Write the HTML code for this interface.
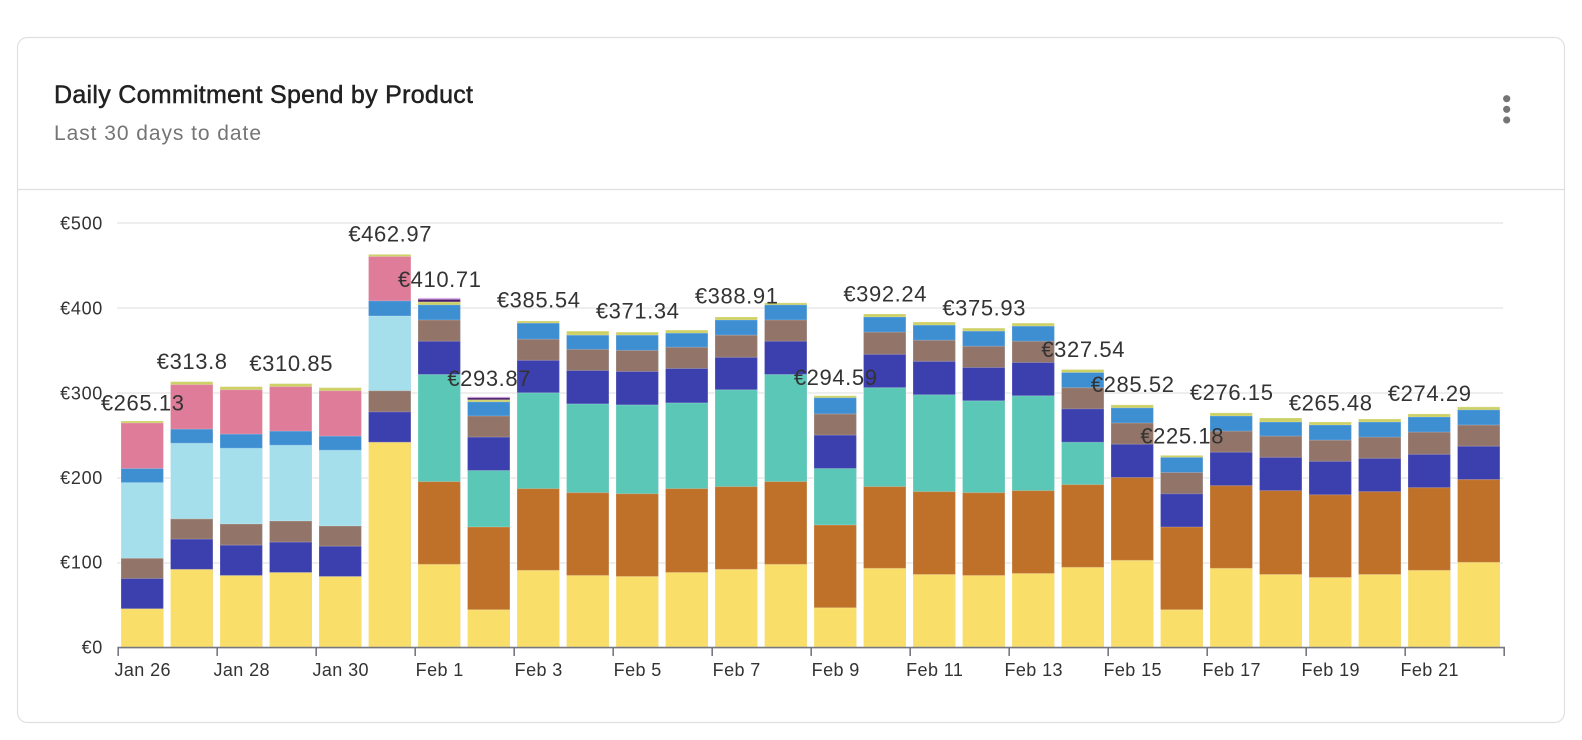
<!DOCTYPE html>
<html>
<head>
<meta charset="utf-8">
<title>Daily Commitment Spend by Product</title>
<style>
html,body{margin:0;padding:0;background:#fff;width:1582px;height:740px;overflow:hidden}
svg{display:block}
text{font-family:"Liberation Sans",sans-serif}
.l{font-size:22px;fill:#333;text-anchor:middle;letter-spacing:.6px}
.y{font-size:18px;fill:#333;text-anchor:end;letter-spacing:.7px}
.x{font-size:18px;fill:#333;text-anchor:middle;letter-spacing:.4px}
.s path{stroke:#fff;stroke-opacity:.22;stroke-width:1}
</style>
</head>
<body>
<svg width="1582" height="740" viewBox="0 0 1582 740" xmlns="http://www.w3.org/2000/svg">
<rect x="17.5" y="37.5" width="1547" height="685" rx="10" fill="#fff" stroke="#e0e0e0" stroke-width="1.2"/>
<line x1="18" x2="1564" y1="189.5" y2="189.5" stroke="#e0e0e0" stroke-width="1.2"/>
<text x="54" y="103" font-size="25" fill="#212121" stroke="#212121" stroke-width=".5" textLength="419" lengthAdjust="spacing">Daily Commitment Spend by Product</text>
<text x="54" y="140" font-size="21" fill="#757575" textLength="207" lengthAdjust="spacing">Last 30 days to date</text>
<circle cx="1506.7" cy="98.7" r="3.6" fill="#757575"/>
<circle cx="1506.7" cy="109.3" r="3.6" fill="#757575"/>
<circle cx="1506.7" cy="120" r="3.6" fill="#757575"/>

<g stroke="#e8e8e8" stroke-width="1.6">
<line x1="117" x2="1503" y1="223" y2="223"/>
<line x1="117" x2="1503" y1="308" y2="308"/>
<line x1="117" x2="1503" y1="393" y2="393"/>
<line x1="117" x2="1503" y1="478" y2="478"/>
<line x1="117" x2="1503" y1="563" y2="563"/>
</g>

<g class="s" transform="scale(1,1.0096)">
<path fill="#D8A8E8" d="M418 295V641h42.4V295zM467.5 393V641h42.4V393z"/>
<path fill="#4A1A6B" d="M418 296.5V641h42.4V296.5zM467.5 394V641h42.4V394z"/>
<path fill="#CDD165" d="M121 417V641h42.4V417zM170.5 378V641h42.4V378zM220 383V641h42.4V383zM269.5 380V641h42.4V380zM319 384V641h42.4V384zM368.5 252V641h42.4V252zM418 299V641h42.4V299zM467.5 396V641h42.4V396zM517 318V641h42.4V318zM566.5 328V641h42.4V328zM616 329V641h42.4V329zM665.5 327V641h42.4V327zM715 314V641h42.4V314zM764.5 300V641h42.4V300zM814 392V641h42.4V392zM863.5 311V641h42.4V311zM913 319V641h42.4V319zM962.5 325V641h42.4V325zM1012 320V641h42.4V320zM1061.5 366V641h42.4V366zM1111 401V641h42.4V401zM1160.5 451V641h42.4V451zM1210 409V641h42.4V409zM1259.5 414V641h42.4V414zM1309 418V641h42.4V418zM1358.5 415V641h42.4V415zM1408 410V641h42.4V410zM1457.5 403V641h42.4V403z"/>
<path fill="#DE7C99" d="M121 419V641h42.4V419zM170.5 381V641h42.4V381zM220 386V641h42.4V386zM269.5 383V641h42.4V383zM319 387V641h42.4V387zM368.5 254V641h42.4V254z"/>
<path fill="#3E8ED2" d="M121 464V641h42.4V464zM170.5 425V641h42.4V425zM220 430V641h42.4V430zM269.5 427V641h42.4V427zM319 432V641h42.4V432zM368.5 298V641h42.4V298zM418 302V641h42.4V302zM467.5 398V641h42.4V398zM517 320V641h42.4V320zM566.5 332V641h42.4V332zM616 332V641h42.4V332zM665.5 330V641h42.4V330zM715 317V641h42.4V317zM764.5 302V641h42.4V302zM814 394V641h42.4V394zM863.5 314V641h42.4V314zM913 322V641h42.4V322zM962.5 328V641h42.4V328zM1012 323V641h42.4V323zM1061.5 369V641h42.4V369zM1111 404V641h42.4V404zM1160.5 453V641h42.4V453zM1210 412V641h42.4V412zM1259.5 418V641h42.4V418zM1309 421V641h42.4V421zM1358.5 418V641h42.4V418zM1408 413V641h42.4V413zM1457.5 406V641h42.4V406z"/>
<path fill="#A5DFEB" d="M121 478V641h42.4V478zM170.5 439V641h42.4V439zM220 444V641h42.4V444zM269.5 441V641h42.4V441zM319 446V641h42.4V446zM368.5 313V641h42.4V313z"/>
<path fill="#937468" d="M121 553V641h42.4V553zM170.5 514V641h42.4V514zM220 519V641h42.4V519zM269.5 516V641h42.4V516zM319 521V641h42.4V521zM368.5 387V641h42.4V387zM418 317V641h42.4V317zM467.5 412V641h42.4V412zM517 336V641h42.4V336zM566.5 346V641h42.4V346zM616 347V641h42.4V347zM665.5 344V641h42.4V344zM715 332V641h42.4V332zM764.5 317V641h42.4V317zM814 410V641h42.4V410zM863.5 329V641h42.4V329zM913 337V641h42.4V337zM962.5 343V641h42.4V343zM1012 338V641h42.4V338zM1061.5 384V641h42.4V384zM1111 419V641h42.4V419zM1160.5 468V641h42.4V468zM1210 427V641h42.4V427zM1259.5 432V641h42.4V432zM1309 436V641h42.4V436zM1358.5 433V641h42.4V433zM1408 428V641h42.4V428zM1457.5 421V641h42.4V421z"/>
<path fill="#3C3FAE" d="M121 573V641h42.4V573zM170.5 534V641h42.4V534zM220 540V641h42.4V540zM269.5 537V641h42.4V537zM319 541V641h42.4V541zM368.5 408V641h42.4V408zM418 338V641h42.4V338zM467.5 433V641h42.4V433zM517 357V641h42.4V357zM566.5 367V641h42.4V367zM616 368V641h42.4V368zM665.5 365V641h42.4V365zM715 354V641h42.4V354zM764.5 338V641h42.4V338zM814 431V641h42.4V431zM863.5 351V641h42.4V351zM913 358V641h42.4V358zM962.5 364V641h42.4V364zM1012 359V641h42.4V359zM1061.5 405V641h42.4V405zM1111 440V641h42.4V440zM1160.5 489V641h42.4V489zM1210 448V641h42.4V448zM1259.5 453V641h42.4V453zM1309 457V641h42.4V457zM1358.5 454V641h42.4V454zM1408 450V641h42.4V450zM1457.5 442V641h42.4V442z"/>
<path fill="#5BC8B7" d="M418 371V641h42.4V371zM467.5 466V641h42.4V466zM517 389V641h42.4V389zM566.5 400V641h42.4V400zM616 401V641h42.4V401zM665.5 399V641h42.4V399zM715 386V641h42.4V386zM764.5 371V641h42.4V371zM814 464V641h42.4V464zM863.5 384V641h42.4V384zM913 391V641h42.4V391zM962.5 397V641h42.4V397zM1012 392V641h42.4V392zM1061.5 438V641h42.4V438z"/>
<path fill="#BF7029" d="M418 477V641h42.4V477zM467.5 522V641h42.4V522zM517 484V641h42.4V484zM566.5 488V641h42.4V488zM616 489V641h42.4V489zM665.5 484V641h42.4V484zM715 482V641h42.4V482zM764.5 477V641h42.4V477zM814 520V641h42.4V520zM863.5 482V641h42.4V482zM913 487V641h42.4V487zM962.5 488V641h42.4V488zM1012 486V641h42.4V486zM1061.5 480V641h42.4V480zM1111 473V641h42.4V473zM1160.5 522V641h42.4V522zM1210 481V641h42.4V481zM1259.5 486V641h42.4V486zM1309 490V641h42.4V490zM1358.5 487V641h42.4V487zM1408 483V641h42.4V483zM1457.5 475V641h42.4V475z"/>
<path fill="#F9DF69" d="M121 603V641h42.4V603zM170.5 564V641h42.4V564zM220 570V641h42.4V570zM269.5 567V641h42.4V567zM319 571V641h42.4V571zM368.5 438V641h42.4V438zM418 559V641h42.4V559zM467.5 604V641h42.4V604zM517 565V641h42.4V565zM566.5 570V641h42.4V570zM616 571V641h42.4V571zM665.5 567V641h42.4V567zM715 564V641h42.4V564zM764.5 559V641h42.4V559zM814 602V641h42.4V602zM863.5 563V641h42.4V563zM913 569V641h42.4V569zM962.5 570V641h42.4V570zM1012 568V641h42.4V568zM1061.5 562V641h42.4V562zM1111 555V641h42.4V555zM1160.5 604V641h42.4V604zM1210 563V641h42.4V563zM1259.5 569V641h42.4V569zM1309 572V641h42.4V572zM1358.5 569V641h42.4V569zM1408 565V641h42.4V565zM1457.5 557V641h42.4V557z"/>
</g>

<path d="M118.2 656V647.6H1504.2V656M217.2 648V656M316.2 648V656M415.2 648V656M514.2 648V656M613.2 648V656M712.2 648V656M811.2 648V656M910.2 648V656M1009.2 648V656M1108.2 648V656M1207.2 648V656M1306.2 648V656M1405.2 648V656" fill="none" stroke="#77777f" stroke-width="1.6"/>

<text class="y" x="103" y="229.5">€500</text>
<text class="y" x="103" y="314.5">€400</text>
<text class="y" x="103" y="399.5">€300</text>
<text class="y" x="103" y="484">€200</text>
<text class="y" x="103" y="568.5">€100</text>
<text class="y" x="103" y="653.5">€0</text>

<text class="x" x="142.7" y="676">Jan 26</text>
<text class="x" x="241.7" y="676">Jan 28</text>
<text class="x" x="340.7" y="676">Jan 30</text>
<text class="x" x="439.7" y="676">Feb 1</text>
<text class="x" x="538.7" y="676">Feb 3</text>
<text class="x" x="637.7" y="676">Feb 5</text>
<text class="x" x="736.7" y="676">Feb 7</text>
<text class="x" x="835.7" y="676">Feb 9</text>
<text class="x" x="934.7" y="676">Feb 11</text>
<text class="x" x="1033.7" y="676">Feb 13</text>
<text class="x" x="1132.7" y="676">Feb 15</text>
<text class="x" x="1231.7" y="676">Feb 17</text>
<text class="x" x="1330.7" y="676">Feb 19</text>
<text class="x" x="1429.7" y="676">Feb 21</text>

<text class="l" x="142.7" y="410.3">€265.13</text>
<text class="l" x="192.2" y="368.9">€313.8</text>
<text class="l" x="291.2" y="371">€310.85</text>
<text class="l" x="390.2" y="241.7">€462.97</text>
<text class="l" x="439.7" y="287.1">€410.71</text>
<text class="l" x="489.2" y="386.1">€293.87</text>
<text class="l" x="538.7" y="307.3">€385.54</text>
<text class="l" x="637.7" y="318.5">€371.34</text>
<text class="l" x="736.7" y="303.3">€388.91</text>
<text class="l" x="835.7" y="385.1">€294.59</text>
<text class="l" x="885.2" y="301.3">€392.24</text>
<text class="l" x="984.2" y="315.5">€375.93</text>
<text class="l" x="1083.2" y="356.8">€327.54</text>
<text class="l" x="1132.7" y="392.2">€285.52</text>
<text class="l" x="1182.2" y="443.6">€225.18</text>
<text class="l" x="1231.7" y="400.2">€276.15</text>
<text class="l" x="1330.7" y="410.3">€265.48</text>
<text class="l" x="1429.7" y="401.2">€274.29</text>
</svg>
</body>
</html>
